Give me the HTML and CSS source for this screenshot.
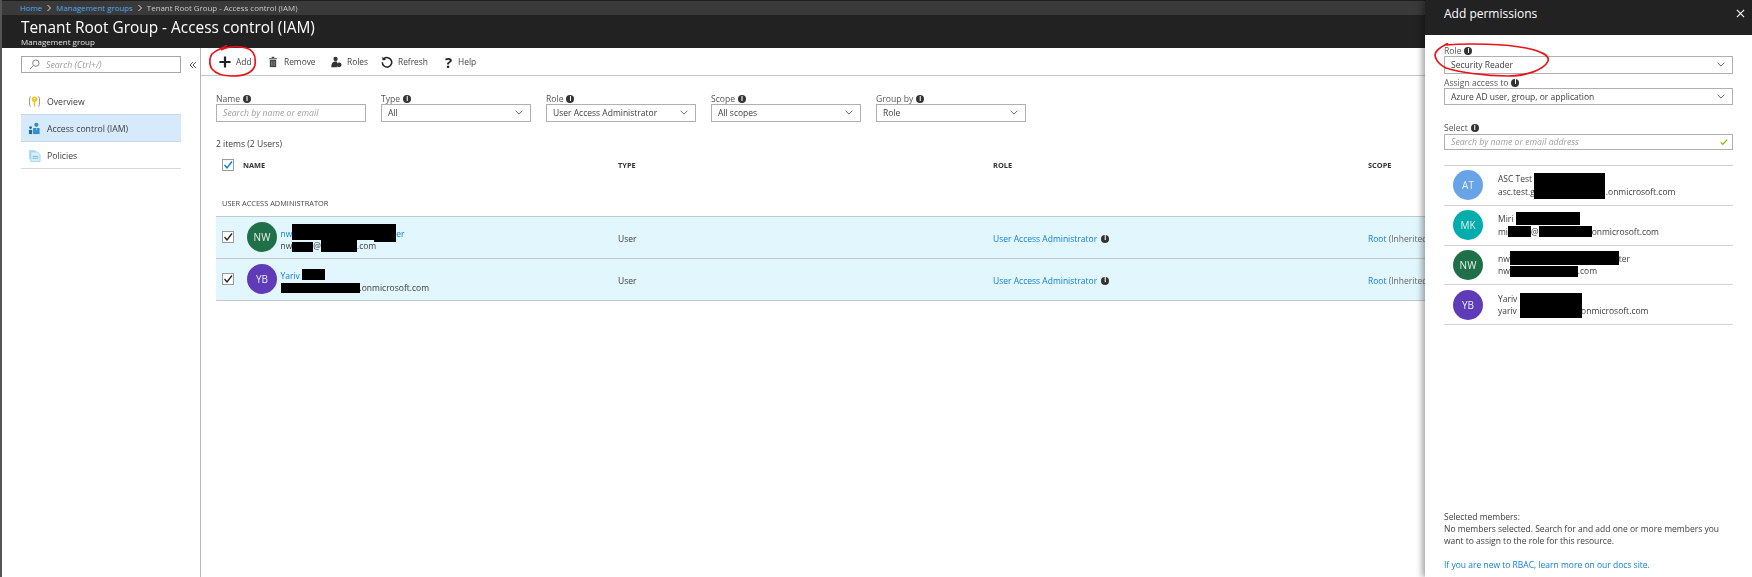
FILE: index.html
```html
<!DOCTYPE html>
<html lang="en">
<head>
<meta charset="utf-8">
<title>Tenant Root Group - Access control (IAM)</title>
<link rel="stylesheet" href="styles.css">
</head>
<body>
<div class="app">
  <div class="blade">
    <nav class="crumbs">
      <a>Home</a><svg class="crumb-sep" viewBox="0 0 6 8"><path d="M1.5 1l3 3-3 3" fill="none" stroke="#ddd"/></svg>
      <a>Management groups</a><svg class="crumb-sep" viewBox="0 0 6 8"><path d="M1.5 1l3 3-3 3" fill="none" stroke="#ddd"/></svg>
      <span>Tenant Root Group - Access control (IAM)</span>
    </nav>
    <header class="title-bar">
      <h1>Tenant Root Group - Access control (IAM)</h1>
      <p>Management group</p>
    </header>
    <div class="body-row">
      <aside class="side">
        <div class="side-search-row">
          <div class="side-search">
            <svg class="search-ico" viewBox="0 0 12 12"><circle cx="7.5" cy="4.5" r="3.5" fill="none" stroke="#777"/><path d="M5 7l-4 4" stroke="#777"/></svg>
            <span>Search (Ctrl+/)</span>
          </div>
          <svg class="collapse" viewBox="0 0 8 8"><path d="M4 1L1 4l3 3M7 1L4 4l3 3" fill="none" stroke="#555"/></svg>
        </div>
        <div class="nav-item">
          <svg class="nav-ico" viewBox="0 0 14 14"><path d="M2.5 1.5C1.2 4 1.2 10 2.5 12.5M11.5 1.5C12.8 4 12.8 10 11.5 12.5" fill="none" stroke="#888"/><circle cx="7" cy="4.5" r="3" fill="#f5c518"/><circle cx="7" cy="3.8" r=".9" fill="#fff"/><path d="M6.2 7h1.600v5.500H6.200z" fill="#f5c518"/></svg>
          <span>Overview</span>
        </div>
        <div class="nav-item is-active">
          <svg class="nav-ico" viewBox="0 0 14 14"><circle cx="9" cy="3" r="2.3" fill="#2f8fc9"/><path d="M5.500 6.500h7v6.500h-7z" fill="#2f8fc9"/><path d="M8.500 7l.5 3 .5-3" fill="#d6eafb"/><circle cx="2.800" cy="6" r="1.500" fill="#1d6f9f"/><path d="M1 8.500h3.500V13H1z" fill="#1d6f9f"/></svg>
          <span>Access control (IAM)</span>
        </div>
        <div class="nav-item">
          <svg class="nav-ico" viewBox="0 0 14 14"><path d="M1 1h7l-.5 10H1z" fill="#b5ddf2"/><path d="M3 3h7l3 3v7.500H3z" fill="#d5eefa" stroke="#8cc6e5" stroke-width=".7"/><path d="M5 8h6M5 10h6" stroke="#5fa9d2" stroke-width=".8"/></svg>
          <span>Policies</span>
        </div>
      </aside>
      <main class="content">
        <div class="toolbar">
          <button class="tool tool-add">
            <svg class="tool-ico" viewBox="0 0 14 14"><path d="M7 .5v13M.5 7h13" stroke="#222" stroke-width="2.600"/></svg>
            <span>Add</span>
          </button>
          <button class="tool tool-remove">
            <svg class="tool-ico" viewBox="0 0 14 14"><path d="M2.500 2.500h9v1.200h-9zM5.500 1h3v1.200h-3z" fill="#444"/><path d="M3.300 4.500h7.400V13H3.300z" fill="#444"/><path d="M5.300 6v5.500M7 6v5.500M8.700 6v5.500" stroke="#bbb" stroke-width=".5"/></svg>
            <span>Remove</span>
          </button>
          <button class="tool tool-roles">
            <svg class="tool-ico" viewBox="0 0 14 14"><circle cx="6.500" cy="3.500" r="2.500" fill="#333"/><path d="M1.500 13c0-4 1.500-6.500 5-6.500 1 0 1.500.2 2 .5v6z" fill="#333"/><circle cx="10.700" cy="10.300" r="2.700" fill="#333"/></svg>
            <span>Roles</span>
          </button>
          <button class="tool tool-refresh">
            <svg class="tool-ico" viewBox="0 0 14 14"><path d="M3.300 3.300a5.500 5.500 0 1 1-1.800 4" fill="none" stroke="#222" stroke-width="1.800"/><path d="M1.500 .8l.3 4.300 4.200-.4z" fill="#222"/></svg>
            <span>Refresh</span>
          </button>
          <button class="tool tool-help">
            <span class="help-mark">?</span>
            <span>Help</span>
          </button>
        </div>
        <div class="filters">
          <label class="filter">
            <span class="flabel">Name <i class="info">i</i></span>
            <span class="finput placeholder">Search by name or email</span>
          </label>
          <label class="filter">
            <span class="flabel">Type <i class="info">i</i></span>
            <span class="finput">All<svg class="chev" viewBox="0 0 10 6"><path d="M.8 .8L5 5 9.200 .8" fill="none" stroke="#444"/></svg></span>
          </label>
          <label class="filter">
            <span class="flabel">Role <i class="info">i</i></span>
            <span class="finput">User Access Administrator<svg class="chev" viewBox="0 0 10 6"><path d="M.8 .8L5 5 9.200 .8" fill="none" stroke="#444"/></svg></span>
          </label>
          <label class="filter">
            <span class="flabel">Scope <i class="info">i</i></span>
            <span class="finput">All scopes<svg class="chev" viewBox="0 0 10 6"><path d="M.8 .8L5 5 9.200 .8" fill="none" stroke="#444"/></svg></span>
          </label>
          <label class="filter">
            <span class="flabel">Group by <i class="info">i</i></span>
            <span class="finput">Role<svg class="chev" viewBox="0 0 10 6"><path d="M.8 .8L5 5 9.200 .8" fill="none" stroke="#444"/></svg></span>
          </label>
        </div>
        <p class="count">2 items (2 Users)</p>
        <div class="grid grid-head">
          <span class="check check-head"><svg viewBox="0 0 10 10"><path d="M1.500 5l2.500 3 5-6.500" fill="none" stroke="#0078d4" stroke-width="1.300"/></svg></span>
          <span>NAME</span><span>TYPE</span><span>ROLE</span><span>SCOPE</span>
        </div>
        <p class="group-name">USER ACCESS ADMINISTRATOR</p>
        <div class="grid grid-row">
          <span class="check"><svg viewBox="0 0 10 10"><path d="M1.500 5l2.500 3 5-6.500" fill="none" stroke="#222" stroke-width="1.300"/></svg></span>
          <div class="who">
            <span class="avatar av-green">NW</span>
            <div class="who-text">
              <a>nw<i class="redact r-a"></i><i class="redact r-b"></i>er</a>
              <span>nw<i class="redact r-c"></i>@<i class="redact r-d"></i>.com</span>
            </div>
          </div>
          <span>User</span>
          <span class="role"><a>User Access Administrator</a><i class="info">i</i></span>
          <span class="scope"><a>Root</a> (Inherited)</span>
        </div>
        <div class="grid grid-row">
          <span class="check"><svg viewBox="0 0 10 10"><path d="M1.500 5l2.500 3 5-6.500" fill="none" stroke="#222" stroke-width="1.300"/></svg></span>
          <div class="who">
            <span class="avatar av-purple">YB</span>
            <div class="who-text">
              <a>Yariv <i class="redact r-e"></i></a>
              <span><i class="redact r-f"></i>.onmicrosoft.com</span>
            </div>
          </div>
          <span>User</span>
          <span class="role"><a>User Access Administrator</a><i class="info">i</i></span>
          <span class="scope"><a>Root</a> (Inherited)</span>
        </div>
      </main>
    </div>
  </div>
  <section class="panel">
    <header class="panel-head">
      <h2>Add permissions</h2>
      <svg class="close" viewBox="0 0 10 10"><path d="M1 1l8 8M9 1L1 9" stroke="#fff" stroke-width="1.200"/></svg>
    </header>
    <div class="panel-body">
      <div class="pfield pfield-role">
        <span class="flabel">Role <i class="info">i</i></span>
        <span class="finput">Security Reader<svg class="chev" viewBox="0 0 10 6"><path d="M.8 .8L5 5 9.200 .8" fill="none" stroke="#444"/></svg></span>
      </div>
      <div class="pfield pfield-assign">
        <span class="flabel">Assign access to <i class="info">i</i></span>
        <span class="finput">Azure AD user, group, or application<svg class="chev" viewBox="0 0 10 6"><path d="M.8 .8L5 5 9.200 .8" fill="none" stroke="#444"/></svg></span>
      </div>
      <div class="pfield pfield-select">
        <span class="flabel">Select <i class="info">i</i></span>
        <span class="finput placeholder">Search by name or email address<svg class="ok" viewBox="0 0 10 10"><path d="M1 5.500l2.500 2.500L9 2" fill="none" stroke="#7fba00" stroke-width="1.600"/></svg></span>
      </div>
      <ul class="people">
        <li>
          <span class="avatar av-blue">AT</span>
          <div class="who-text"><b>ASC Test <i class="redact r-g"></i></b><span>asc.test.g<i class="spacer s-71"></i>.onmicrosoft.com</span></div>
        </li>
        <li>
          <span class="avatar av-teal">MK</span>
          <div class="who-text"><b>Miri <i class="redact r-h"></i></b><span>mi<i class="redact r-i"></i>@<i class="redact r-j"></i>onmicrosoft.com</span></div>
        </li>
        <li>
          <span class="avatar av-green">NW</span>
          <div class="who-text"><b>nw<i class="redact r-k"></i>ter</b><span>nw<i class="redact r-l"></i>.com</span></div>
        </li>
        <li>
          <span class="avatar av-purple">YB</span>
          <div class="who-text"><b>Yariv <i class="redact r-m"></i></b><span>yariv<i class="spacer s-62"></i>.onmicrosoft.com</span></div>
        </li>
      </ul>
      <div class="panel-foot">
        <p>Selected members:<br>No members selected. Search for and add one or more members you want to assign to the role for this resource.</p>
        <a>If you are new to RBAC, learn more on our docs site.</a>
      </div>
    </div>
  </section>
  <svg class="ink ink-add" viewBox="0 0 48 32"><path d="M18 0C15 3 8 4 3 9 0 13 0 20 3 24c4 5 12 7 20 7 12 0 21-3 23-11 1-8-1-15-9-17C28 1 18 2 12 5" fill="none" stroke="#e8141c" stroke-width="1.700"/></svg>
  <svg class="ink ink-role" viewBox="0 0 116 35"><path d="M14 0C12 2 6 3 2 9-1 14 4 21 12 25c12 4 38 8 62 8 18 0 36-6 40-15 2-6-8-10-22-13C72 1 34 0 12 2" fill="none" stroke="#e8141c" stroke-width="1.700"/></svg>
</div>
</body>
</html>
```
FILE: styles.css
```css
* { box-sizing: border-box; }
html, body { margin: 0; height: 577px; overflow: hidden; background: #fff; }
body { font-family: "Open Sans", "Noto Sans", sans-serif; font-size: 8.5px; color: #3c3c3c; }
p, h1, h2, ul { margin: 0; padding: 0; }
i { font-style: normal; }
a { color: #0f7fd4; }

.app { position: relative; display: flex; width: 1752px; height: 577px; filter: blur(.4px); }
.blade { flex: 1; min-width: 0; display: flex; flex-direction: column; overflow: hidden; border-left: 2px solid #555; }

.crumbs { height: 15px; flex: none; display: flex; align-items: center; padding-left: 18px; background: #3a3a3a; border-top: 1px solid #1d1d1d; color: #c9c9c9; font-size: 7.9px; white-space: nowrap; }
.crumbs a { color: #4ea8ea; }
.crumb-sep { width: 6px; height: 8px; margin: 0 4px; }
.title-bar { height: 33px; flex: none; background: #222; color: #fff; padding: 3px 0 0 19px; }
.title-bar h1 { font-weight: 400; font-size: 15.4px; line-height: 19px; white-space: nowrap; }
.title-bar p { font-size: 8px; line-height: 10px; color: #e4e4e4; }

.body-row { flex: 1; display: flex; min-height: 0; }
.side { width: 199px; flex: none; border-right: 1px solid #b5b5b5; padding: 8px 0 0 19px; }
.side-search-row { display: flex; align-items: center; height: 17px; margin-bottom: 15px; }
.side-search { width: 160px; height: 17px; flex: none; border: 1px solid #a6a6a6; display: flex; align-items: center; padding-left: 7px; gap: 6px; color: #9a9a9a; font-style: italic; font-size: 8.8px; }
.search-ico { width: 11px; height: 11px; }
.collapse { width: 8px; height: 8px; margin-left: 8px; }
.nav-item { width: 160px; height: 27px; display: flex; align-items: center; padding: 1.5px 0 0 7px; gap: 6px; border-bottom: 1px solid #d9d9d9; font-size: 8.7px; }
.nav-item.is-active { background: #d6eafb; border-top: 1px solid #c5d8e8; border-bottom-color: #c5d8e8; height: 28px; margin-top: -1px; }
.nav-ico { width: 13px; height: 13px; flex: none; }

.content { flex: 1; min-width: 0; overflow: hidden; }
.toolbar { height: 28px; border-bottom: 1px solid #c6c6c6; display: flex; align-items: center; padding-left: 18px; }
.tool { border: 0; background: none; padding: 0; display: flex; align-items: center; font: inherit; color: #444; font-size: 8.4px; }
.tool-ico { width: 12px; height: 12px; flex: none; margin-right: 5px; }
.tool-add { width: 48px; }
.tool-remove { width: 63px; }
.tool-roles { width: 51px; }
.tool-refresh { width: 60px; }
.help-mark { font-weight: 700; font-size: 15px; color: #222; width: 15px; line-height: 12px; text-align: center; margin-right: 2px; }

.filters { display: flex; gap: 15px; padding: 17px 0 0 15px; }
.filter { display: block; width: 150px; }
.flabel { display: flex; align-items: center; gap: 3px; height: 12px; font-size: 8.6px; color: #555; }
.finput { display: flex; align-items: center; justify-content: space-between; height: 17.5px; border: 1px solid #b0b0b0; border-bottom-width: 1.5px; padding: 0 7px 0 6px; font-size: 8.5px; margin-top: -1px; white-space: nowrap; }
.placeholder { color: #9e9e9e; font-style: italic; font-size: 8.7px; }
.chev { width: 8px; height: 5px; flex: none; }
.ok { width: 8px; height: 8px; flex: none; margin-right: -3px; }
.info { display: inline-flex; align-items: center; justify-content: center; width: 8px; height: 8px; border-radius: 50%; background: #333; color: #fff; font-size: 6.5px; font-weight: 700; line-height: 1; }

.count { margin: 16.5px 0 0 15px; font-size: 8.55px; line-height: 12px; }
.grid { display: grid; grid-template-columns: 27px repeat(3, 375px) 200px; align-items: center; margin-left: 15px; }
.grid-head { height: 16px; margin-top: 7px; font-size: 7.4px; font-weight: 700; color: #333; }
.check { width: 12px; height: 12px; margin-left: 6px; border: 1px solid #999; background: #fff; display: flex; }
.check svg { width: 100%; height: 100%; }
.grid-row .check { margin-top: -3px; }
.group-name { margin: 25px 0 0 21px; font-size: 7.4px; line-height: 10px; color: #444; height: 18px; }
.grid-row { height: 42px; padding-top: 2px; background: #e2f6fd; border-top: 1px solid #c2c8cb; white-space: nowrap; }
.grid-row:last-child { height: 43px; border-bottom: 1px solid #c2c8cb; }
.who { display: flex; align-items: center; margin-left: 4px; gap: 3.5px; }
.who .avatar { margin-top: -4px; }
.who .who-text { margin-top: 2px; line-height: 12px; }
.who-text { display: flex; flex-direction: column; line-height: 12.5px; }
.who-text b { font-weight: 400; }
.people .who-text { margin-top: 1px; }
.role { display: flex; align-items: center; gap: 4px; }
.scope { color: #666; overflow: hidden; }
.avatar { width: 30px; height: 30px; flex: none; border-radius: 50%; display: flex; align-items: center; justify-content: center; color: #e8f0ea; font-size: 10px; }
.av-green { background: #1f7048; }
.av-purple { background: #5f3bb8; }
.av-blue { background: #68a3e8; }
.av-teal { background: #00acac; }

/* Redaction bars sit on the text baseline and cover whatever lies over them */
.redact, .spacer { display: inline-block; height: 0; position: relative; }
.redact::after { content: ""; position: absolute; left: 0; right: 0; background: #000; }
.r-a { width: 82px; } .r-a::after { height: 16px; bottom: -3px; }
.r-b { width: 22px; } .r-b::after { height: 18px; bottom: -5px; }
.r-c { width: 21px; } .r-c::after { height: 10px; bottom: -3px; }
.r-d { width: 36px; } .r-d::after { height: 12px; bottom: -3px; }
.r-e { width: 23px; } .r-e::after { height: 11px; bottom: -1px; }
.r-f { width: 79px; } .r-f::after { height: 10px; bottom: -2px; }
.r-g { width: 71px; } .r-g::after { height: 26px; bottom: -17px; }
.r-h { width: 64px; } .r-h::after { height: 13px; bottom: -3px; }
.r-i { width: 23px; } .r-i::after { height: 11px; bottom: -2px; }
.r-j { width: 53px; } .r-j::after { height: 11px; bottom: -2px; }
.r-k { width: 109px; } .r-k::after { height: 14px; bottom: -3px; }
.r-l { width: 68px; } .r-l::after { height: 11px; bottom: -3px; }
.r-m { width: 62px; } .r-m::after { height: 25px; bottom: -16px; }
.s-71 { width: 71px; }
.s-62 { width: 62px; }

.panel { position: relative; z-index: 1; width: 327px; flex: none; background: #fff; box-shadow: -3px 0 6px rgba(0,0,0,.35); display: flex; flex-direction: column; }
.panel-head { height: 35px; flex: none; background: #222; color: #fff; display: flex; align-items: center; justify-content: space-between; padding: 0 7px 8px 19px; }
.panel-head h2 { font-weight: 400; font-size: 12px; }
.close { width: 9px; height: 9px; }
.panel-body { flex: 1; display: flex; flex-direction: column; padding: 0 19px; }
.pfield-role { margin-top: 10px; }
.pfield-assign { margin-top: 3px; }
.pfield-select { margin-top: 17px; }
.pfield-select .finput { height: 16px; margin-top: 0; }
.people { list-style: none; margin-top: 15px; border-top: 1px solid #d0d0d0; }
.people li { height: 39.75px; display: flex; align-items: center; gap: 15px; padding-left: 9px; border-bottom: 1px solid #d4d4d4; white-space: nowrap; }
.panel-foot { margin-top: auto; padding-bottom: 6px; font-size: 8.5px; line-height: 12px; }
.panel-foot p { margin-bottom: 12px; }

.ink { position: absolute; z-index: 2; }
.ink-add { left: 209px; top: 45px; width: 48px; height: 32px; }
.ink-role { left: 1434px; top: 43px; width: 116px; height: 35px; }
```
